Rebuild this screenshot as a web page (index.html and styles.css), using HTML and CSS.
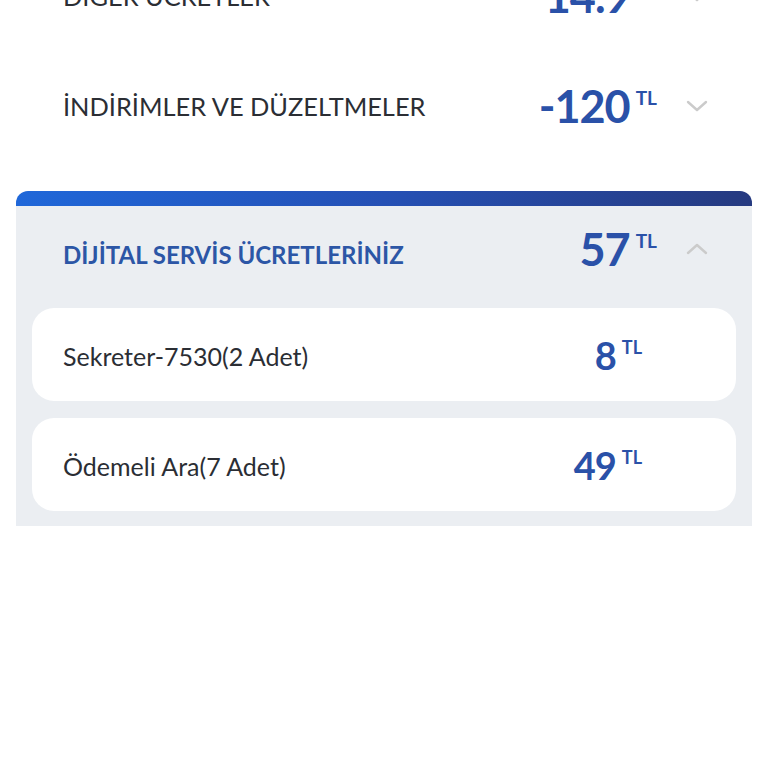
FILE: index.html
```html
<!DOCTYPE html>
<html lang="tr">
<head>
<meta charset="utf-8">
<link rel="stylesheet" href="styles.css">
</head>
<body>
<div class="page">
  <div class="row">
    <span class="label">DİĞER ÜCRETLER</span>
    <span class="amount"><span class="num">14.9</span><span class="cur">TL</span></span>
    <svg class="chev" viewBox="0 0 22 14"><path d="M2 3 L11 11 L20 3"/></svg>
  </div>
  <div class="row">
    <span class="label">İNDİRİMLER VE DÜZELTMELER</span>
    <span class="amount"><span class="num">-120</span><span class="cur">TL</span></span>
    <svg class="chev" viewBox="0 0 22 14"><path d="M2 3 L11 11 L20 3"/></svg>
  </div>

  <section class="card">
    <div class="card-bar"></div>
    <div class="card-body">
      <div class="card-head">
        <span class="label label-blue">DİJİTAL SERVİS ÜCRETLERİNİZ</span>
        <span class="amount"><span class="num">57</span><span class="cur">TL</span></span>
        <svg class="chev" viewBox="0 0 22 14"><path d="M2 11 L11 3 L20 11"/></svg>
      </div>
      <div class="items">
        <div class="item">
          <span class="item-label">Sekreter-7530(2 Adet)</span>
          <span class="amount small"><span class="num">8</span><span class="cur">TL</span></span>
        </div>
        <div class="item">
          <span class="item-label">Ödemeli Ara(7 Adet)</span>
          <span class="amount small"><span class="num">49</span><span class="cur">TL</span></span>
        </div>
      </div>
    </div>
  </section>
</div>
</body>
</html>
```

FILE: styles.css
```css
* { box-sizing: border-box; }
html, body { margin: 0; padding: 0; background: #ffffff; }
body { font-family: "Lato", "Noto Sans", sans-serif; overflow: hidden; height: 768px; }

.page { margin-top: -59px; }

.row, .card-head {
  display: flex;
  align-items: center;
  height: 110px;
  padding: 0 60px 0 63px;
}

.label {
  flex: 1;
  font-size: 25.4px;
  color: #2b2e34;
}
.label-blue { color: #2c56a6; font-weight: 700; font-size: 24px; margin-top: 10px; }

.amount {
  display: flex;
  align-items: flex-start;
  color: #2a51a8;
  font-weight: 700;
}
.amount .num { font-size: 45px; line-height: 1; letter-spacing: -1px; }
.amount .cur { font-size: 19px; line-height: 1; margin-left: 6px; margin-top: 4px; }

.amount.small .num { font-size: 38px; }
.amount.small .cur { font-size: 18px; margin-top: 2px; }

.chev {
  width: 22px;
  height: 14px;
  margin-left: 29px;
  fill: none;
  stroke: #cbcbcb;
  stroke-width: 2.4;
  stroke-linecap: round;
  stroke-linejoin: round;
}

.card { margin: 30px 16px 0; }
.card-bar {
  height: 15px;
  border-radius: 12px 12px 0 0;
  background: linear-gradient(90deg, #1f67d9 0%, #2550b5 50%, #263a80 100%);
}
.card-body { background: #ebeef2; padding: 0 16px 15px; }
.card-head { height: 86px; padding: 0 44px 0 47px; margin: 0 -16px; }

.items { display: flex; flex-direction: column; gap: 17px; margin-top: 16px; }
.item {
  display: flex;
  align-items: center;
  height: 93px;
  background: #ffffff;
  border-radius: 22px;
  padding: 0 94px 0 31px;
}
.item-label { flex: 1; font-size: 25px; color: #2b2e34; margin-top: 3px; }
```
